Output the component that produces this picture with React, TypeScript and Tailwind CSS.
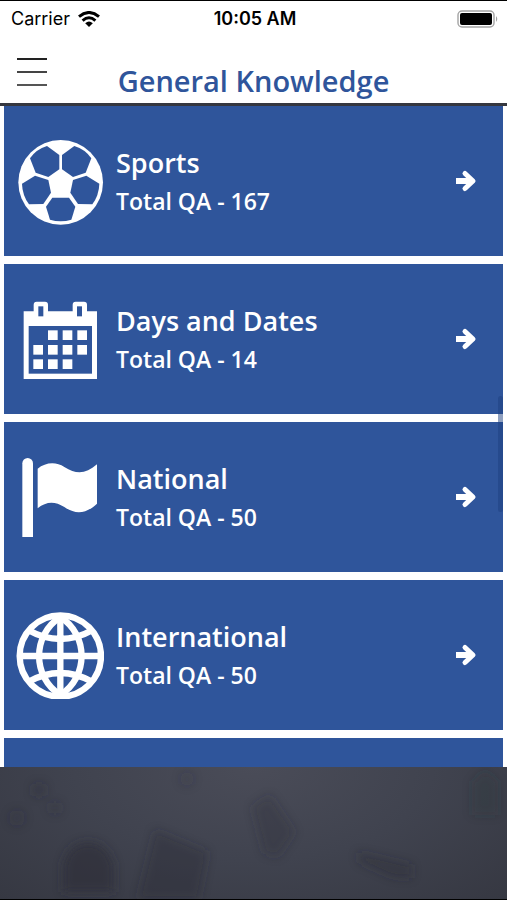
import React from "react";

function SoccerIcon() {
  return (
    <svg viewBox="48 96 264 264" className="size-22 shrink-0" aria-hidden="true">
      <circle cx="182" cy="232" r="127" fill="#fff" />
      <g fill="#2f559b">
        <path d="M141 123L178 150V193L145 216L107 203L90 160Q108 133 141 123Z" />
        <path d="M223 123L186 150V193L219 216L257 203L274 160Q256 133 223 123Z" />
        <path d="M66 236L105 212L145 225L153 263L130 297L87 298Q67 271 66 236Z" />
        <path d="M298 236L259 212L219 225L211 263L234 297L277 298Q297 271 298 236Z" />
        <path d="M157 278H207L226 305L214 344Q182 354 150 344L138 305Z" />
      </g>
    </svg>
  );
}

function CalendarIcon() {
  const cells = [
    [144, 196], [188, 196], [232, 196],
    [100, 240], [144, 240], [188, 240], [232, 240],
    [100, 283], [144, 283], [188, 283],
  ];
  return (
    <svg viewBox="48 90 264 264" className="size-22 shrink-0" aria-hidden="true">
      <path fill="#fff" d="M71 139H101V119Q101 110 110 110H135Q144 110 144 119V139H218V119Q218 110 227 110H252Q261 110 261 119V139H291V342H71Z" />
      <g fill="#2f559b">
        <rect x="115" y="124" width="15" height="30" />
        <rect x="231" y="124" width="15" height="30" />
        <rect x="86" y="183" width="190" height="143" />
      </g>
      <g fill="#fff">
        {cells.map(([x, y]) => (
          <rect key={`${x}-${y}`} x={x} y={y} width="29" height="29" />
        ))}
      </g>
    </svg>
  );
}

function FlagIcon() {
  return (
    <svg viewBox="48 84 264 264" className="size-22 shrink-0" fill="#fff" aria-hidden="true">
      <path d="M67 336V115A16 16 0 0 1 99 115V336Z" />
      <path d="M113 131C136 112 168 109 193 126C230 149 257 147 291 118V236C258 267 226 269 193 246C164 228 139 229 113 250Z" />
    </svg>
  );
}

function GlobeIcon() {
  return (
    <svg viewBox="48 78 264 264" className="size-22 shrink-0" fill="none" stroke="#fff" strokeWidth="19" strokeLinejoin="bevel" aria-hidden="true">
      <circle cx="181" cy="213" r="122" />
      <path d="M181 96C96 150 96 276 181 330C266 276 266 150 181 96Z" />
      <path d="M181 92V334M59 213H303M84 135Q181 189 278 135M84 291Q181 237 278 291" />
    </svg>
  );
}

function ArrowIcon() {
  return (
    <svg viewBox="0 0 20 20" className="size-5 shrink-0 overflow-visible" fill="none" stroke="#fff" strokeWidth="5" strokeLinejoin="round" aria-hidden="true">
      <path d="M0 10H15" strokeWidth="6" />
      <path d="M9 2.500L17 10L9 17.500" strokeLinecap="round" />
    </svg>
  );
}

function WifiIcon() {
  return (
    <svg viewBox="0 0 22 16" className="h-4 w-[22px]" aria-hidden="true">
      <g fill="none" stroke="#000" strokeWidth="3">
        <path d="M1 5.6Q11 -2.6 21 5.6" />
        <path d="M4.6 9.6Q11 4 17.4 9.6" />
      </g>
      <path d="M7.2 12.2Q11 9 14.8 12.2L11 16Z" />
    </svg>
  );
}

function BatteryIcon() {
  return (
    <svg viewBox="0 0 42 18" className="h-[18px] w-[42px]" aria-hidden="true">
      <rect x="1" y="1" width="36" height="16" rx="4" fill="none" stroke="#a3a3a3" strokeWidth="1.4" />
      <rect x="3" y="3" width="32" height="12" rx="2" />
      <path d="M39 6Q41.500 9 39 12Z" fill="#a3a3a3" />
    </svg>
  );
}

const topics = [
  { name: "Sports", total: 167, Icon: SoccerIcon },
  { name: "Days and Dates", total: 14, Icon: CalendarIcon },
  { name: "National", total: 50, Icon: FlagIcon },
  { name: "International", total: 50, Icon: GlobeIcon },
];

export default function App() {
  return (
    <div className="flex h-screen flex-col border-y border-black bg-white font-['Open_Sans',sans-serif]">
      <div className="grid h-9 shrink-0 grid-cols-3 items-center pr-2 pl-[11px] font-['Inter',sans-serif] text-lg text-black">
        <div className="flex items-center gap-2">
          <span>Carrier</span>
          <WifiIcon />
        </div>
        <span className="text-center font-semibold whitespace-nowrap">10:05 AM</span>
        <div className="flex justify-end">
          <BatteryIcon />
        </div>
      </div>

      <header className="grid h-[69px] shrink-0 grid-cols-[48px_1fr_48px] items-center border-b-3 border-[#35373f]">
        <button type="button" aria-label="Menu" className="flex flex-col gap-[11px] pt-1 pl-[17px]">
          <span className="h-[2px] w-[30px] bg-[#222]" />
          <span className="h-[2px] w-[30px] bg-[#444]" />
          <span className="h-[2px] w-[30px] bg-[#555]" />
        </button>
        <h1 className="pt-[22px] text-center text-[29px] leading-9 font-semibold text-[#2f559b]">General Knowledge</h1>
      </header>

      <main className="relative min-h-0 flex-1 overflow-hidden px-1">
        <ul className="flex flex-col gap-2">
          {topics.map(({ name, total, Icon }) => (
            <li key={name}>
              <a href="#" className="flex h-[150px] items-center gap-3 bg-[#2f559b] pr-[27px] pl-3 text-white">
                <Icon />
                <span className="flex flex-1 flex-col">
                  <span className="text-[27px] leading-10 font-semibold">{name}</span>
                  <span className="text-[23px] leading-9 font-semibold">Total QA - {total}</span>
                </span>
                <ArrowIcon />
              </a>
            </li>
          ))}
          <li className="h-[150px] bg-[#2f559b]" />
        </ul>
        <div className="absolute top-[290px] right-1 h-[116px] w-[5px] rounded-full bg-[#1d3f80]/50" />
      </main>

      <footer className="relative h-[132px] shrink-0 overflow-hidden bg-[radial-gradient(ellipse_at_50%_0%,#4a4c58_0%,#40434f_50%,#363842_100%)]">
        <svg viewBox="0 0 507 132" preserveAspectRatio="none" className="absolute inset-0 size-full" aria-hidden="true">
          <defs>
            <filter id="soft" x="-20%" y="-20%" width="140%" height="140%">
              <feGaussianBlur stdDeviation="5" />
            </filter>
          </defs>
          <g fill="#2b2c36" filter="url(#soft)">
            <path d="M63 125V98Q68 76 88 75Q108 76 114 98V125Z" opacity="0.6" />
            <path d="M155 63L208 85L199 132H138Z" opacity="0.35" />
            <path d="M252 40L270 28L295 65L278 90L264 86Z" opacity="0.3" />
            <path d="M358 85L412 98V111L393 110L359 95Z" opacity="0.35" />
            <path d="M472 15L485 3L498 14V48H472Z" opacity="0.22" />
            <circle cx="39" cy="23" r="7" opacity="0.3" />
            <circle cx="55" cy="41" r="6" opacity="0.25" />
            <circle cx="17" cy="51" r="8" opacity="0.2" />
            <circle cx="187" cy="12" r="7" opacity="0.18" />
          </g>
        </svg>
      </footer>
    </div>
  );
}
